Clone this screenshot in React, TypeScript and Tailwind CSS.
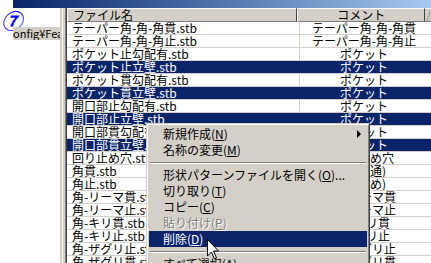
import React from "react";

type Row = { file: string; comment: string; selected?: boolean };

const rows: Row[] = [
  { file: "テーパー角-角-角貫.stb", comment: "テーパー角-角-角貫" },
  { file: "テーパー角-角-角止.stb", comment: "テーパー角-角-角止" },
  { file: "ポケット止勾配有.stb", comment: "ポケット" },
  { file: "ポケット止立壁.stb", comment: "ポケット", selected: true },
  { file: "ポケット貫勾配有.stb", comment: "ポケット" },
  { file: "ポケット貫立壁.stb", comment: "ポケット", selected: true },
  { file: "開口部止勾配有.stb", comment: "ポケット" },
  { file: "開口部止立壁.stb", comment: "ポケット", selected: true },
  { file: "開口部貫勾配有.stb", comment: "ポケット" },
  { file: "開口部貫立壁.stb", comment: "ポケット", selected: true },
  { file: "回り止め穴.stb", comment: "回り止め穴" },
  { file: "角貫.stb", comment: "角(貫通)" },
  { file: "角止.stb", comment: "角(止め)" },
  { file: "角-リーマ貫.stb", comment: "角-リーマ貫" },
  { file: "角-リーマ止.stb", comment: "角-リーマ止" },
  { file: "角-キリ貫.stb", comment: "角-キリ貫" },
  { file: "角-キリ止.stb", comment: "角-キリ止" },
  { file: "角-ザグリ止.stb", comment: "角-ザグリ止" },
  { file: "角-ザグリ貫.stb", comment: "角-ザグリ貫" },
];

function MenuItem({
  label,
  hotkey,
  suffix = "",
  active,
  disabled,
  submenu,
}: {
  label: string;
  hotkey: string;
  suffix?: string;
  active?: boolean;
  disabled?: boolean;
  submenu?: boolean;
}) {
  return (
    <div
      className={`h-[16px] flex items-center pl-[14px] pr-[6px] whitespace-nowrap ${
        active ? "bg-[#0a246a] text-white" : disabled ? "text-[#808080]" : "text-black"
      }`}
      style={disabled ? { textShadow: "1px 1px 0 #ffffff" } : undefined}
    >
      <span className="flex-1">
        {label}(<u>{hotkey}</u>){suffix}
      </span>
      {submenu && (
        <span className="w-0 h-0 border-y-[4px] border-y-transparent border-l-[4px] border-l-black" />
      )}
    </div>
  );
}

function Separator() {
  return (
    <div className="h-[9px] flex flex-col justify-center px-[1px]">
      <div className="h-[1px] bg-[#808080]" />
      <div className="h-[1px] bg-white" />
    </div>
  );
}

export default function App() {
  return (
    <div
      className="w-[431px] h-[263px] relative overflow-hidden bg-white text-[12px] leading-[12px] text-black"
      style={{ fontFamily: '"Noto Sans CJK JP", "Liberation Sans", sans-serif' }}
    >
      {/* title strip */}
      <div className="flex h-[8px]">
        <div className="w-[13px] bg-white" />
        <div className="flex-1 bg-gradient-to-r from-[#0a246a] to-[#a6caf0]" />
      </div>

      <div className="flex h-[255px]">
        {/* left tree pane */}
        <div className="w-[60px] bg-white flex flex-col">
          <div className="h-[19px] pl-[1px] pt-[2px] overflow-visible">
            <span className="text-[21px] leading-[20px] text-[#0000ff] italic font-bold">⑦</span>
          </div>
          <div className="ml-[13px] h-[13px] bg-[#d4d0c8] overflow-hidden whitespace-nowrap text-[11px] leading-[13px]">
            onfig¥Feat
          </div>
        </div>

        {/* splitter */}
        <div className="w-[7px] bg-[#d4d0c8] flex">
          <div className="w-[2px]" />
          <div className="w-[1px] bg-white" />
          <div className="w-[2px]" />
          <div className="w-[1px] bg-[#808080]" />
          <div className="w-[1px] bg-[#404040]" />
        </div>

        {/* list view */}
        <div className="flex-1 flex flex-col overflow-hidden">
          <div className="h-[18px] flex bg-[#d4d0c8]">
            <div className="w-[232px] flex items-center pl-[5px] border-t border-l border-white border-b border-b-[#808080] border-r border-r-[#404040]">
              ファイル名
            </div>
            <div className="w-[129px] flex items-center justify-center border-t border-l border-white border-b border-b-[#808080] border-r border-r-[#404040]">
              コメント
            </div>
            <div className="flex-1 border-t border-white border-b border-b-[#808080] text-[#808080] pl-[1px] flex items-center">
              /
            </div>
          </div>
          {rows.map((r, i) => (
            <div
              key={i}
              className={`h-[13px] shrink-0 flex border-b border-[#d4d0c8] ${
                r.selected ? "bg-[#0a246a] text-white" : "bg-white"
              }`}
            >
              <div className="w-[232px] pl-[5px] whitespace-nowrap overflow-hidden">{r.file}</div>
              <div
                className={`w-[129px] text-center whitespace-nowrap overflow-hidden border-l ${
                  r.selected ? "border-[#0a246a]" : "border-[#d4d0c8]"
                }`}
              >
                {r.comment}
              </div>
              <div className="flex-1" />
            </div>
          ))}
        </div>
      </div>

      {/* context menu */}
      <div className="absolute left-[146px] top-[123px] w-[224px] bg-[#d4d0c8] border border-t-[#d4d0c8] border-l-[#d4d0c8] border-r-[#404040] border-b-[#404040]">
        <div className="border border-t-white border-l-white border-r-[#808080] border-b-[#808080] p-[1px] pb-[20px]">
          <MenuItem label="新規作成" hotkey="N" submenu />
          <MenuItem label="名称の変更" hotkey="M" />
          <Separator />
          <MenuItem label="形状パターンファイルを開く" hotkey="O" suffix="..." />
          <MenuItem label="切り取り" hotkey="T" />
          <MenuItem label="コピー" hotkey="C" />
          <MenuItem label="貼り付け" hotkey="P" disabled />
          <MenuItem label="削除" hotkey="D" active />
          <Separator />
          <MenuItem label="すべて選択" hotkey="A" />
        </div>
      </div>

      {/* mouse cursor */}
      <svg
        className="absolute left-[207px] top-[239px]"
        width="13"
        height="22"
        viewBox="0 0 13 22"
      >
        <path
          d="M0.5 0.5 L0.5 17 L4.5 13 L7.5 20 L9.5 19 L6.5 12 L11.5 12 Z"
          fill="#ffffff"
          stroke="#000000"
          strokeWidth="1"
        />
      </svg>
    </div>
  );
}
